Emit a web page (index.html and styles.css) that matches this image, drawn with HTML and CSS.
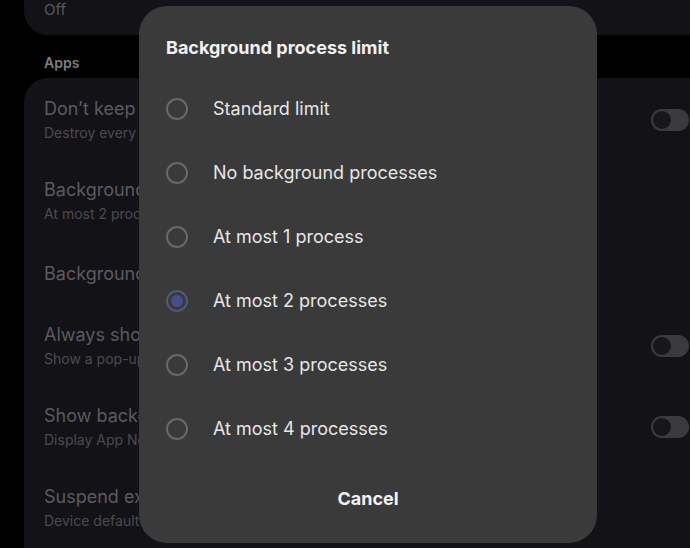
FILE: index.html
```html
<!DOCTYPE html>
<html lang="en">
<head>
<meta charset="utf-8">
<title>Background process limit</title>
<link rel="stylesheet" href="styles.css">
</head>
<body>
<div class="screen">
  <div class="card card-top">
    <div class="off">Off</div>
  </div>
  <div class="section-label">Apps</div>
  <div class="card list">
    <div class="row two">
      <div class="texts">
        <div class="title">Don’t keep activities</div>
        <div class="sub">Destroy every activity as soon as the user leaves it</div>
      </div>
      <div class="toggle"><span class="knob"></span></div>
    </div>
    <div class="row two">
      <div class="texts">
        <div class="title">Background process limit</div>
        <div class="sub">At most 2 processes</div>
      </div>
    </div>
    <div class="row one">
      <div class="texts">
        <div class="title">Background check</div>
      </div>
    </div>
    <div class="row two">
      <div class="texts">
        <div class="title">Always show crash dialog</div>
        <div class="sub">Show a pop-up every time an app crashes</div>
      </div>
      <div class="toggle"><span class="knob"></span></div>
    </div>
    <div class="row two">
      <div class="texts">
        <div class="title">Show background ANRs</div>
        <div class="sub">Display App Not Responding dialog for background apps</div>
      </div>
      <div class="toggle"><span class="knob"></span></div>
    </div>
    <div class="row two">
      <div class="texts">
        <div class="title">Suspend execution for cached apps</div>
        <div class="sub">Device default</div>
      </div>
    </div>
  </div>

  <div class="dialog">
    <div class="dialog-title">Background process limit</div>
    <div class="options">
      <div class="option"><span class="radio"></span><span class="label">Standard limit</span></div>
      <div class="option"><span class="radio"></span><span class="label">No background processes</span></div>
      <div class="option"><span class="radio"></span><span class="label">At most 1 process</span></div>
      <div class="option"><span class="radio checked"></span><span class="label">At most 2 processes</span></div>
      <div class="option"><span class="radio"></span><span class="label">At most 3 processes</span></div>
      <div class="option"><span class="radio"></span><span class="label">At most 4 processes</span></div>
    </div>
    <div class="actions"><span class="cancel">Cancel</span></div>
  </div>
</div>
</body>
</html>
```
FILE: styles.css
```css
html, body {
  margin: 0;
  padding: 0;
  background: #000;
}
body {
  font-family: Inter, "Noto Sans", "Liberation Sans", sans-serif;
  width: 690px;
  height: 548px;
  overflow: hidden;
}
.screen {
  position: relative;
  width: 690px;
  height: 548px;
  overflow: hidden;
  padding-left: 24px;
  box-sizing: border-box;
}
.card {
  background: #131217;
  margin-right: -40px;
}
.card-top {
  height: 35px;
  border-radius: 0 0 24px 24px;
  padding-left: 20px;
  padding-top: 1px;
  box-sizing: border-box;
}
.off {
  font-size: 15px;
  line-height: 18px;
  color: #58585c;
}
.section-label {
  font-size: 14px;
  font-weight: 600;
  color: #7d7d80;
  line-height: 18px;
  padding: 19px 0 0 20px;
  height: 24px;
}
.list {
  border-radius: 24px;
  padding-top: 2px;
  height: 520px;
}
.row {
  display: flex;
  align-items: center;
  padding-left: 20px;
  padding-right: 41px;
  box-sizing: border-box;
  white-space: nowrap;
}
.row.two {
  height: 81px;
  padding-top: 17px;
  padding-bottom: 18px;
}
.row.one {
  height: 64px;
  padding-top: 20px;
  padding-bottom: 20px;
}
.texts {
  flex: 1;
  min-width: 0;
  overflow: hidden;
}
.title {
  font-size: 18px;
  line-height: 24px;
  color: #5b5b60;
}
.sub {
  font-size: 14px;
  line-height: 20px;
  margin-top: 2px;
  color: #4b4b50;
}
.toggle {
  width: 38px;
  height: 22px;
  border-radius: 11px;
  background: #3b3b3e;
  display: flex;
  align-items: center;
  padding-left: 2px;
  box-sizing: border-box;
  flex: none;
}
.knob {
  width: 18px;
  height: 18px;
  border-radius: 50%;
  background: #17161b;
  display: block;
}

.dialog {
  position: absolute;
  left: 139px;
  top: 6px;
  width: 458px;
  height: 537px;
  background: #3a3a3a;
  border-radius: 28px;
  box-sizing: border-box;
  padding-top: 30px;
}
.dialog-title {
  font-size: 18px;
  font-weight: 700;
  line-height: 24px;
  color: #f1f1f1;
  padding-left: 27px;
}
.options {
  margin-top: 17px;
}
.option {
  display: flex;
  align-items: center;
  height: 64px;
  padding-left: 27px;
}
.radio {
  width: 22px;
  height: 22px;
  border-radius: 50%;
  border: 2px solid #686868;
  box-sizing: border-box;
  flex: none;
  display: flex;
  align-items: center;
  justify-content: center;
}
.radio.checked {
  border: 2.5px solid #55557c;
}
.radio.checked::after {
  content: "";
  width: 12px;
  height: 12px;
  border-radius: 50%;
  background: #4b4b90;
}
.label {
  margin-left: 25px;
  font-size: 18px;
  line-height: 24px;
  color: #e6e6e6;
}
.actions {
  margin-top: 26px;
  text-align: center;
}
.cancel {
  font-size: 18px;
  font-weight: 700;
  line-height: 24px;
  color: #f2f2f2;
}
```
